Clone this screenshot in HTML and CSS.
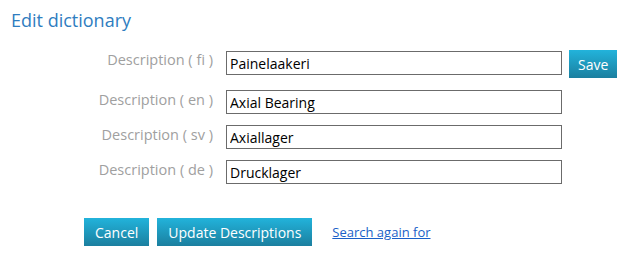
FILE: index.html
```html
<!DOCTYPE html>
<html lang="en">
<head>
    <meta charset="UTF-8">
    <meta name="viewport" content="width=device-width, initial-scale=1.0">
    <title>Edit dictionary</title>
    <link rel="stylesheet" href="styles.css">
</head>
<body>
    <h2 class="page-title">Edit dictionary</h2>

    <div class="dict-form">
        <div class="form-row first-row">
            <label class="form-label" for="descFi">Description ( fi )</label>
            <input class="form-input" type="text" id="descFi" value="Painelaakeri">
            <button class="btn">Save</button>
        </div>
        <div class="form-row">
            <label class="form-label" for="descEn">Description ( en )</label>
            <input class="form-input" type="text" id="descEn" value="Axial Bearing">
        </div>
        <div class="form-row">
            <label class="form-label" for="descSv">Description ( sv )</label>
            <input class="form-input" type="text" id="descSv" value="Axiallager">
        </div>
        <div class="form-row">
            <label class="form-label" for="descDe">Description ( de )</label>
            <input class="form-input" type="text" id="descDe" value="Drucklager">
        </div>
    </div>

    <div class="button-box">
        <button class="btn">Cancel</button>
        <button class="btn">Update Descriptions</button>
        <a class="search-link" href="#">Search again for</a>
    </div>
</body>
</html>
```

FILE: styles.css
```css
* {
    box-sizing: border-box;
    margin: 0;
    padding: 0;
}

body {
    font-family: "Open Sans", "Liberation Sans", sans-serif;
    background: white;
    padding: 8px 0 0 11px;
}

.page-title {
    font-size: 18px;
    font-weight: normal;
    color: #2f7dbf;
    line-height: 25px;
}

.dict-form {
    display: flex;
    flex-direction: column;
    gap: 11px;
    margin-top: 17px;
}

.form-row {
    display: flex;
    align-items: flex-start;
}

.first-row {
    margin-bottom: 1px;
}

.form-label {
    width: 215px;
    padding-right: 13px;
    text-align: right;
    font-size: 14.5px;
    line-height: 20px;
    color: #a0a0a0;
}

.form-input {
    width: 336px;
    height: 24px;
    padding: 0 3px;
    border: 1px solid #6b6b6b;
    font-family: inherit;
    font-size: 14px;
    color: black;
}

.first-row .form-input {
    margin-top: 1px;
}

.btn {
    height: 28px;
    padding: 0 11px;
    border: none;
    font-family: inherit;
    font-size: 14px;
    color: white;
    background: linear-gradient(#22b3db, #1b7f9f);
}

.first-row .btn {
    margin-left: 7px;
    padding: 0 9px;
}

.button-box {
    display: flex;
    align-items: center;
    gap: 8px;
    margin-top: 34px;
    padding-left: 73px;
}

.search-link {
    margin-left: 12px;
    font-size: 13px;
    color: #1a5fc8;
}
```
